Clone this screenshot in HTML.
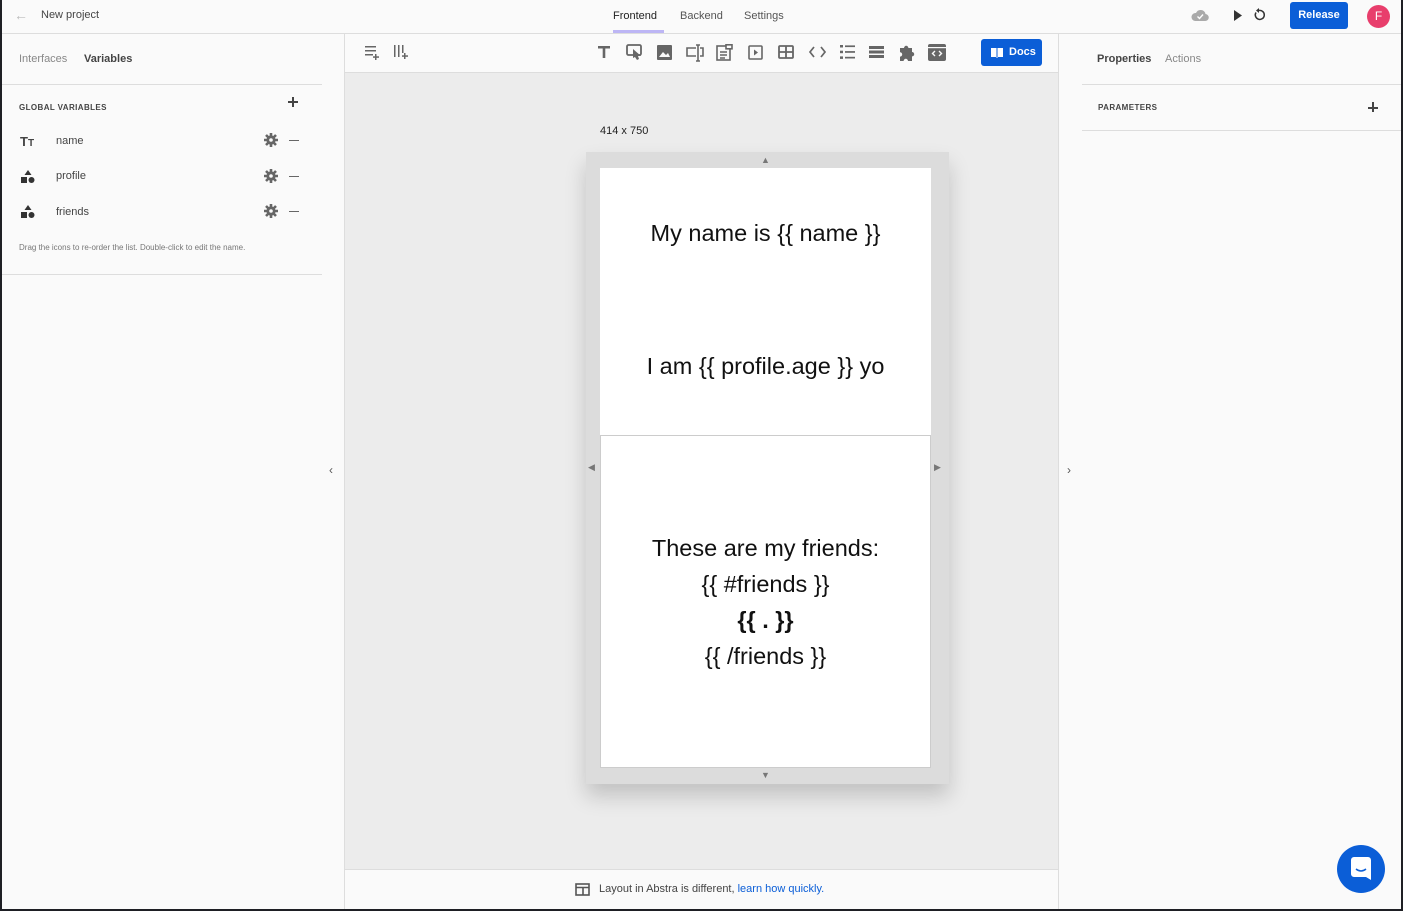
<!DOCTYPE html>
<html><head><meta charset="utf-8"><style>
*{box-sizing:border-box;margin:0;padding:0}
body{width:1403px;height:911px;background:#1e1f24;font-family:"Liberation Sans",sans-serif;position:relative;overflow:hidden;color:#333}
.app{position:absolute;left:2px;top:0;width:1399px;height:909px;background:#fafafa}
.abs{position:absolute}
.t{font-size:11px;color:#444}
.hl{position:absolute;height:1px;background:#ddd}
.vl{position:absolute;width:1px;background:#ddd}
.ic{position:absolute}
</style></head><body><div class="app">
<svg width="0" height="0" style="position:absolute"><defs>
<g id="gear"><circle cx="7" cy="7" r="4.6" fill="#666"/><g stroke="#666" stroke-width="2.6"><path d="M7 0v14M0 7h14M2 2l10 10M12 2L2 12"/></g><circle cx="7" cy="7" r="1.8" fill="#fafafa"/></g>
</defs></svg>
<!-- top bar -->
<div class="abs" style="left:12px;top:7px;color:#bbb;font-size:14px">&#8592;</div>
<div class="abs t" style="left:39px;top:9px;font-size:11px">New project</div>
<div class="abs" style="left:611px;top:10px;font-size:11px;color:#222">Frontend</div>
<div class="abs" style="left:611px;top:30px;width:51px;height:3px;background:#bdb6f5"></div>
<div class="abs t" style="left:678px;top:10px;color:#555">Backend</div>
<div class="abs t" style="left:742px;top:10px;color:#555">Settings</div>
<svg class="ic" style="left:1189px;top:9px" width="18" height="13" viewBox="0 0 18 13"><path d="M4 12h10a3.5 3.5 0 0 0 .5-7A5 5 0 0 0 5 4a4 4 0 0 0-1 8z" fill="#aaa"/><path d="M6.5 7.5l2 2 3.5-4" stroke="#fff" stroke-width="1.4" fill="none"/></svg>
<svg class="ic" style="left:1231px;top:10px" width="10" height="11"><path d="M1 0l8 5.5L1 11z" fill="#333"/></svg>
<svg class="ic" style="left:1250px;top:8px" width="14" height="14" viewBox="0 0 14 14"><path d="M4 4.5A4.5 4.5 0 1 0 7 2.5" stroke="#333" stroke-width="1.5" fill="none"/><path d="M7 0v5l-3-2.5z" fill="#333"/></svg>
<div class="abs" style="left:1288px;top:2px;width:58px;height:27px;background:#0b5ed7;border-radius:3px;color:#fff;font-weight:bold;font-size:11px;text-align:center;line-height:27px">Release</div>
<div class="abs" style="left:1365px;top:5px;width:23px;height:23px;background:#e83e6c;border-radius:50%;color:#fff;font-size:12px;text-align:center;line-height:23px">F</div>
<div class="hl" style="left:0;top:33px;width:1399px"></div>
<!-- left panel -->
<div class="vl" style="left:342px;top:33px;height:876px"></div>
<div class="abs t" style="left:17px;top:53px;color:#888">Interfaces</div>
<div class="abs t" style="left:82px;top:53px;font-weight:bold;color:#444">Variables</div>
<div class="hl" style="left:0;top:84px;width:320px"></div>
<div class="abs" style="left:17px;top:103px;font-size:8px;font-weight:bold;color:#444;letter-spacing:.4px">GLOBAL VARIABLES</div>
<div class="abs" style="left:286px;top:101px;width:10px;height:1.5px;background:#444"></div>
<div class="abs" style="left:290.3px;top:97px;width:1.5px;height:10px;background:#444"></div>
<div class="abs" style="left:18px;top:134px;font-weight:bold;font-size:13px;color:#444">T<span style="font-size:10px">T</span></div>
<div class="abs t" style="left:54px;top:135px">name</div>
<div class="abs t" style="left:54px;top:170px">profile</div>
<div class="abs t" style="left:54px;top:206px">friends</div>
<svg class="ic" style="left:19px;top:170px" width="14" height="14"><path d="M7 0l3.5 5h-7z" fill="#333"/><rect x="0" y="7" width="6" height="6" fill="#333"/><circle cx="10.5" cy="10" r="3" fill="#333"/></svg>
<svg class="ic" style="left:19px;top:205px" width="14" height="14"><path d="M7 0l3.5 5h-7z" fill="#333"/><rect x="0" y="7" width="6" height="6" fill="#333"/><circle cx="10.5" cy="10" r="3" fill="#333"/></svg>
<svg class="ic" style="left:262px;top:133px" width="14" height="14"><use href="#gear"/></svg>
<svg class="ic" style="left:262px;top:169px" width="14" height="14"><use href="#gear"/></svg>
<svg class="ic" style="left:262px;top:204px" width="14" height="14"><use href="#gear"/></svg>
<div class="abs" style="left:287px;top:140px;width:10px;height:1px;background:#666"></div>
<div class="abs" style="left:287px;top:176px;width:10px;height:1px;background:#666"></div>
<div class="abs" style="left:287px;top:211px;width:10px;height:1px;background:#666"></div>
<div class="abs" style="left:17px;top:243px;font-size:8px;color:#777">Drag the icons to re-order the list. Double-click to edit the name.</div>
<div class="hl" style="left:0;top:274px;width:320px"></div>
<div class="abs" style="left:327px;top:463px;font-size:12px;color:#555">&#8249;</div>
<!-- canvas -->
<div class="abs" style="left:343px;top:34px;width:713px;height:38px;background:#fafafa"></div>
<div class="hl" style="left:343px;top:72px;width:713px"></div>
<div class="abs" style="left:343px;top:73px;width:713px;height:796px;background:#ececec"></div>
<svg class="ic" style="left:363px;top:46px" width="14" height="14" fill="#666"><rect x="0" y="0" width="11" height="1.5"/><rect x="0" y="4" width="11" height="1.5"/><rect x="0" y="8" width="8" height="1.5"/><rect x="10" y="8" width="1.5" height="6"/><rect x="8" y="10.3" width="6" height="1.5"/></svg>
<svg class="ic" style="left:392px;top:45px" width="15" height="15" fill="#666"><rect x="0" y="0" width="1.5" height="12"/><rect x="4" y="0" width="1.5" height="12"/><rect x="8" y="0" width="1.5" height="8"/><rect x="10" y="8" width="1.5" height="6"/><rect x="8" y="10.3" width="6" height="1.5"/></svg>
<svg class="ic" style="left:596px;top:46px" width="12" height="12" fill="#666"><path d="M0 0h12v2.5H7.3V12H4.7V2.5H0z"/></svg>
<svg class="ic" style="left:624px;top:44px" width="18" height="17"><rect x="1" y="1" width="14" height="10" rx="1.5" fill="none" stroke="#666" stroke-width="1.8"/><path d="M7 5v9l2-1 2 3 2-1-1-3h3z" fill="#666"/></svg>
<svg class="ic" style="left:655px;top:45px" width="15" height="15"><rect width="15" height="15" rx="1" fill="#666"/><path d="M2 12l4-5 3 3 2-2 2 4z" fill="#fafafa"/></svg>
<svg class="ic" style="left:684px;top:44px" width="18" height="18" fill="none" stroke="#666" stroke-width="1.6"><path d="M10 4H1v8h9M14 4h3v8h-3M12 1v16M10 1h4M10 17h4"/></svg>
<svg class="ic" style="left:714px;top:44px" width="18" height="17" fill="none" stroke="#666" stroke-width="1.6"><rect x="1" y="2" width="13" height="14"/><rect x="10" y="0.8" width="6" height="4" fill="#fafafa"/><path d="M4 8h7M4 11h7M4 14h5"/></svg>
<svg class="ic" style="left:746px;top:45px" width="15" height="15"><rect x="1" y="1" width="13" height="13" rx="1" fill="none" stroke="#666" stroke-width="1.6"/><path d="M6 4.5l4 3-4 3z" fill="#666"/></svg>
<svg class="ic" style="left:776px;top:45px" width="16" height="14" fill="none" stroke="#666" stroke-width="1.8"><rect x="1" y="1" width="14" height="12" rx="1"/><path d="M1 7h14M8 1v12"/></svg>
<svg class="ic" style="left:807px;top:46px" width="17" height="12" fill="none" stroke="#666" stroke-width="1.7"><path d="M5 1L1 6l4 5M12 1l4 5-4 5"/></svg>
<svg class="ic" style="left:838px;top:45px" width="15" height="14" fill="#666"><rect x="0" y="0" width="3" height="2.5"/><rect x="5" y="0.4" width="10" height="1.7"/><rect x="0" y="5.7" width="3" height="2.5"/><rect x="5" y="6.1" width="10" height="1.7"/><rect x="0" y="11.4" width="3" height="2.5"/><rect x="5" y="11.8" width="10" height="1.7"/></svg>
<svg class="ic" style="left:867px;top:46px" width="15" height="12" fill="#666"><rect y="0" width="15" height="3"/><rect y="4.5" width="15" height="3"/><rect y="9" width="15" height="3"/></svg>
<svg class="ic" style="left:897px;top:44px" width="17" height="17" fill="#666"><path d="M1 4h4a2.2 2.2 0 1 1 4.4 0H13v4a2.2 2.2 0 1 1 0 4.4V17H9a2.2 2.2 0 1 0-4.4 0H1v-4.4a2.2 2.2 0 1 0 0-4.4z"/></svg>
<svg class="ic" style="left:926px;top:44px" width="18" height="17"><rect width="18" height="17" rx="2" fill="#666"/><rect x="2" y="4" width="14" height="11" fill="#fafafa" opacity="0"/><path d="M7 7l-2.5 2.5L7 12M11 7l2.5 2.5L11 12" stroke="#fafafa" stroke-width="1.4" fill="none"/><rect x="0" y="3" width="18" height="1.2" fill="#fafafa"/></svg>
<div class="abs" style="left:979px;top:39px;width:61px;height:27px;background:#0b5ed7;border-radius:3px;color:#fff;font-weight:bold;font-size:11px;line-height:27px;padding-left:28px">Docs</div>
<svg class="ic" style="left:989px;top:48px" width="12" height="10"><path d="M0 0h5l1 1 1-1h5v9H7l-1 1-1-1H0z" fill="#fff"/><path d="M6 1v8" stroke="#0b5ed7"/></svg>
<div class="abs" style="left:598px;top:125px;font-size:11px;color:#222">414 x 750</div>
<div class="abs" style="left:584px;top:152px;width:363px;height:632px;background:#dcdcdc;box-shadow:0 12px 20px rgba(0,0,0,.18)"></div>
<div class="abs" style="left:598px;top:168px;width:331px;height:267px;background:#fff"></div>
<div class="abs" style="left:598px;top:435px;width:331px;height:333px;background:#fff;border:1px solid #ccc"></div>
<div class="abs" style="left:759px;top:155px;font-size:9px;color:#777">&#9650;</div>
<div class="abs" style="left:759px;top:770px;font-size:9px;color:#777">&#9660;</div>
<div class="abs" style="left:586px;top:462px;font-size:9px;color:#777">&#9664;</div>
<div class="abs" style="left:932px;top:462px;font-size:9px;color:#777">&#9654;</div>
<div class="abs" style="left:598px;top:220px;width:331px;text-align:center;font-size:23.5px;color:#111">My name is {{ name }}</div>
<div class="abs" style="left:598px;top:353px;width:331px;text-align:center;font-size:23.5px;color:#111">I am {{ profile.age }} yo</div>
<div class="abs" style="left:598px;top:530px;width:331px;text-align:center;font-size:23.5px;color:#111;line-height:36px">These are my friends:<br>{{ #friends }}<br><b>{{ . }}</b><br>{{ /friends }}</div>
<div class="hl" style="left:343px;top:869px;width:713px"></div>
<svg class="ic" style="left:573px;top:883px" width="15" height="13" fill="none" stroke="#555" stroke-width="1.6"><rect x="1" y="1" width="13" height="11"/><path d="M1 4.5h13M8 4.5V12"/></svg>
<div class="abs" style="left:597px;top:883px;font-size:11px;color:#444">Layout in Abstra is different, <span style="color:#0b5ed7">learn how quickly.</span></div>
<!-- right panel -->
<div class="vl" style="left:1056px;top:33px;height:876px"></div>
<div class="abs" style="left:1065px;top:463px;font-size:12px;color:#555">&#8250;</div>
<div class="abs t" style="left:1095px;top:53px;font-weight:bold">Properties</div>
<div class="abs t" style="left:1163px;top:53px;color:#888">Actions</div>
<div class="hl" style="left:1080px;top:84px;width:319px"></div>
<div class="abs" style="left:1096px;top:103px;font-size:8px;font-weight:bold;color:#444;letter-spacing:.4px">PARAMETERS</div>
<div class="abs" style="left:1366px;top:107px;width:10px;height:1.5px;background:#444"></div>
<div class="abs" style="left:1370.3px;top:102px;width:1.5px;height:10px;background:#444"></div>
<div class="hl" style="left:1080px;top:130px;width:319px"></div>
<div class="abs" style="left:1335px;top:845px;width:48px;height:48px;background:#0b5ed7;border-radius:50%"></div>
<svg class="ic" style="left:1349px;top:857px" width="20" height="24"><path d="M3 0h14a3 3 0 0 1 3 3v20l-5-3H3a3 3 0 0 1-3-3V3a3 3 0 0 1 3-3z" fill="#fff"/><path d="M5 12q5 4 10 0" stroke="#0b5ed7" stroke-width="1.5" fill="none"/></svg>
</div></body></html>
